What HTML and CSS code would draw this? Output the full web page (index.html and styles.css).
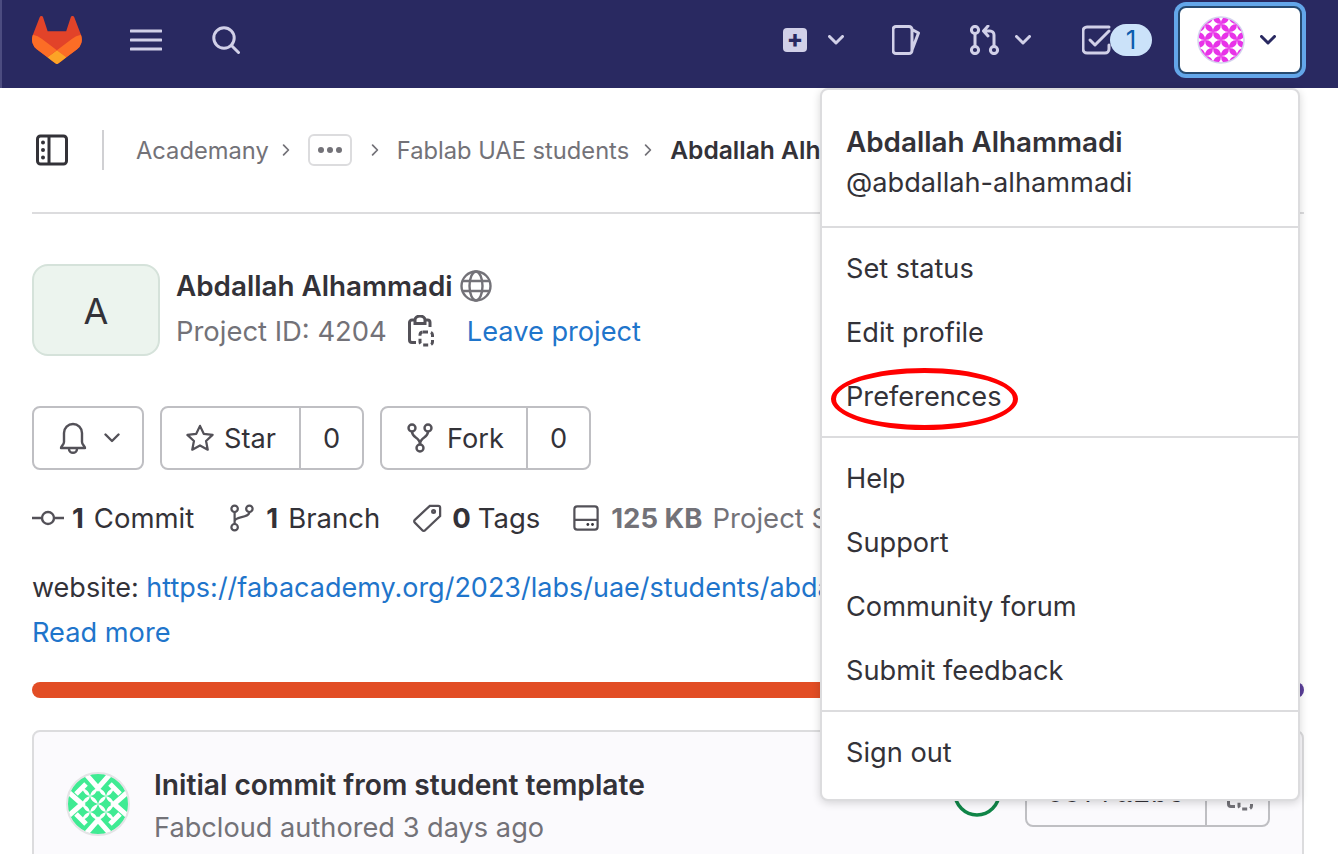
FILE: index.html
```html
<!DOCTYPE html>
<html lang="en">
<head>
<meta charset="utf-8">
<title>Abdallah Alhammadi</title>
<link rel="stylesheet" href="styles.css">
</head>
<body>
<div class="page">
  <header class="topbar">
    <div class="topbar-left">
      <svg class="logo" viewBox="0 0 25 24"><path fill="#E24329" d="m24.507 9.5-.034-.09L21.082.562a.896.896 0 0 0-1.694.091l-2.29 7.01H7.825L5.535.653a.898.898 0 0 0-1.694-.09L.451 9.411.416 9.5a6.297 6.297 0 0 0 2.09 7.278l.012.01.03.022 5.16 3.867 2.56 1.935 1.554 1.176a1.051 1.051 0 0 0 1.268 0l1.555-1.176 2.56-1.935 5.197-3.89.014-.01A6.297 6.297 0 0 0 24.507 9.5Z"/><path fill="#FC6D26" d="m24.507 9.5-.034-.09a11.44 11.44 0 0 0-4.56 2.051l-7.447 5.632 4.742 3.584 5.197-3.89.014-.01A6.297 6.297 0 0 0 24.507 9.5Z"/><path fill="#FCA326" d="m7.707 20.677 2.56 1.935 1.555 1.176a1.051 1.051 0 0 0 1.268 0l1.555-1.176 2.56-1.935-4.743-3.584-4.755 3.584Z"/><path fill="#FC6D26" d="M5.01 11.461a11.43 11.43 0 0 0-4.56-2.05L.416 9.5a6.297 6.297 0 0 0 2.09 7.278l.012.01.03.022 5.16 3.867 4.745-3.584-7.444-5.632Z"/></svg>
      <svg class="ic-bar" viewBox="0 0 32 22"><path d="M1 2h30M1 11h30M1 20h30"/></svg>
      <svg class="ic-bar ic-search" viewBox="0 0 28 28"><circle cx="12" cy="12" r="10.2"/><path d="M19.5 19.5l7 7"/></svg>
    </div>
    <div class="topbar-right">
      <span class="tb-plus">+</span>
      <svg class="ic-bar chev" viewBox="0 0 16 10"><path d="M1.5 1.5L8 8l6.5-6.5"/></svg>
      <svg class="ic-bar ic-issue" viewBox="0 0 28 30"><path d="M4 1.5h13a3 3 0 0 1 3 3v21a3 3 0 0 1-3 3H4a3 3 0 0 1-3-3v-21a3 3 0 0 1 3-3zM20 4.5l6.5 3.5-6.5 17"/></svg>
      <svg class="ic-bar ic-mr" viewBox="0 0 30 30"><circle cx="5" cy="5" r="3.6"/><circle cx="5" cy="25" r="3.6"/><circle cx="24" cy="25" r="3.6"/><path d="M5 9v12M24 21V10a4 4 0 0 0-4-4h-5M18 1l-4.5 5 4.5 5"/></svg>
      <svg class="ic-bar chev chev-mr" viewBox="0 0 16 10"><path d="M1.5 1.5L8 8l6.5-6.5"/></svg>
      <div class="todo">
        <svg class="ic-bar ic-todo" viewBox="0 0 30 30"><path d="M27 20v4a4 4 0 0 1-4 4H5a4 4 0 0 1-4-4V6a4 4 0 0 1 4-4h22"/><path d="M8 15l5 5L27 6"/></svg>
        <span class="badge">1</span>
      </div>
      <button class="userbtn">
        <svg class="avatar-s" viewBox="0 0 48 48">
          <defs><pattern id="mag" x="0" y="0" width="16" height="16" patternUnits="userSpaceOnUse"><rect width="16" height="16" fill="#fff"/><path fill="#e833e8" d="M0 0Q8 0 8 8 0 8 0 0zM16 0Q8 0 8 8 16 8 16 0zM0 16Q8 16 8 8 0 8 0 16zM16 16Q8 16 8 8 16 8 16 16z"/></pattern></defs>
          <circle cx="24" cy="24" r="23" fill="url(#mag)" stroke="#d5d3ee" stroke-width="1.5"/>
        </svg>
        <svg class="chev-dark" viewBox="0 0 16 10"><path d="M1.5 1.5L8 8l6.5-6.5"/></svg>
      </button>
    </div>
  </header>

  <main class="content">
    <nav class="crumbs">
      <svg class="ic-side" viewBox="0 0 32 32"><rect x="1.5" y="2" width="29" height="28" rx="3"/><path d="M13 2v28"/><circle class="dot" cx="7" cy="8.500" r="2"/><circle class="dot" cx="7" cy="16" r="2"/><circle class="dot" cx="7" cy="23.500" r="2"/></svg>
      <span class="crumb-div"></span>
      <span class="crumb">Academany</span>
      <svg class="crumb-chev chev-first" viewBox="0 0 10 16"><path d="M2 2l6 6-6 6"/></svg>
      <span class="more"><i></i><i></i><i></i></span>
      <svg class="crumb-chev chev-second" viewBox="0 0 10 16"><path d="M2 2l6 6-6 6"/></svg>
      <span class="crumb">Fablab UAE students</span>
      <svg class="crumb-chev" viewBox="0 0 10 16"><path d="M2 2l6 6-6 6"/></svg>
      <span class="crumb crumb-cur">Abdallah Alhammadi</span>
    </nav>

    <section class="project">
      <div class="letter">A</div>
      <div class="project-info">
        <div class="project-name"><b>Abdallah Alhammadi</b>
          <svg class="ic-globe" viewBox="0 0 32 32"><circle cx="16" cy="16" r="14.500"/><ellipse cx="16" cy="16" rx="6.500" ry="14.500"/><path d="M2.500 11h27M2.500 21h27"/></svg>
        </div>
        <div class="project-id"><span class="id-text">Project ID: 4204</span>
          <svg class="ic-clip" viewBox="0 0 26 32"><path d="M7 5H4a2.500 2.500 0 0 0-2.500 2.500V25a2.500 2.500 0 0 0 2.500 2.500h4M17 5h2.500A2.500 2.500 0 0 1 22 7.500V12M7 8.500V5a5 4 0 0 1 10 0v3.500z"/><rect class="dash" x="12" y="17" width="12.500" height="13" rx="3"/></svg>
          <a class="link leave">Leave project</a>
        </div>
      </div>
    </section>

    <div class="actions">
      <div class="btn bell">
        <svg class="ic-btn ic-bell" viewBox="0 0 28 32"><path d="M14 2a9 9 0 0 0-9 9v9c0 3-3 4-3 6h24c0-2-3-3-3-6v-9a9 9 0 0 0-9-9zM10 27c0 5 8 5 8 0"/></svg>
        <svg class="ic-chev-g" viewBox="0 0 16 10"><path d="M1.500 1.500L8 8l6.500-6.500"/></svg>
      </div>
      <div class="btn split star">
        <span class="btn-l"><svg class="ic-btn" viewBox="0 0 30 30"><path d="M15 2l4 8.500 9.500 1.200-7 6.500 1.800 9.300L15 23l-8.300 4.500 1.800-9.300-7-6.500L11 10.500z"/></svg>Star</span>
        <span class="btn-r">0</span>
      </div>
      <div class="btn split fork">
        <span class="btn-l"><svg class="ic-btn ic-fork" viewBox="0 0 26 30"><circle cx="5" cy="5" r="3.500"/><circle cx="21" cy="5" r="3.500"/><circle cx="13" cy="25" r="3.500"/><path d="M5 8.500c0 7 8 5 8 13M21 8.500c0 7-8 5-8 13"/></svg>Fork</span>
        <span class="btn-r">0</span>
      </div>
    </div>

    <div class="stats">
      <span class="stat st-commit"><svg class="ic-commit" viewBox="0 0 32 16"><circle cx="16" cy="8" r="6"/><path d="M0 8h10M22 8h10"/></svg><b>1</b> Commit</span>
      <span class="stat st-branch"><svg class="ic-branch" viewBox="0 0 26 30"><circle cx="5" cy="5" r="3.500"/><circle cx="21" cy="5" r="3.500"/><circle cx="5" cy="25" r="3.500"/><path d="M5 8.500v13M21 8.500c0 7-16 4-16 10"/></svg><b>1</b> Branch</span>
      <span class="stat st-tag"><svg class="ic-tag" viewBox="0 0 32 32"><path d="M19 3h9a2 2 0 0 1 2 2v9L14 29a2 2 0 0 1-3 0l-8-8a2 2 0 0 1 0-3z"/><circle cx="23" cy="9" r="1.500"/></svg><b>0</b> Tags</span>
      <span class="stat st-size"><svg class="ic-disk" viewBox="0 0 28 28"><rect x="1.500" y="1.500" width="25" height="25" rx="3"/><path d="M1.500 16h25"/><circle class="dot" cx="16" cy="21" r="1.500"/><circle class="dot" cx="21" cy="21" r="1.500"/></svg><b class="muted">125 KB</b> <span class="muted">Project Storage</span></span>
    </div>

    <p class="desc">website: <a class="link">https://fabacademy.org/2023/labs/uae/students/abdallah-alhammadi/</a></p>
    <a class="link readmore">Read more</a>

    <div class="langbar"><span class="lang-main"></span><span class="lang-end"></span></div>

    <section class="commit">
      <svg class="avatar-c" viewBox="0 0 64 64">
        <defs>
          <pattern id="grn" x="16" y="16" width="16" height="16" patternUnits="userSpaceOnUse"><rect width="16" height="16" fill="#3feb93"/><path fill="#fff" d="M0 0Q7 2 8 8 2 7 0 0zM16 0Q9 2 8 8 14 7 16 0zM0 16Q7 14 8 8 2 9 0 16zM16 16Q9 14 8 8 14 9 16 16z"/></pattern>
          <clipPath id="grn-clip"><circle cx="32" cy="32" r="30.500"/></clipPath>
        </defs>
        <g clip-path="url(#grn-clip)">
          <rect width="64" height="64" fill="#3feb93"/>
          <rect x="16" y="16" width="32" height="32" fill="url(#grn)"/>
          <path class="grn-x" d="M18 0L32 16 46 0M18 64L32 48 46 64M0 18L16 32 0 46M64 18L48 32 64 46M20 12L10 22M44 12L54 22M20 52L10 42M44 52L54 42"/>
        </g>
        <circle cx="32" cy="32" r="31" stroke="#e4e4e6" stroke-width="2"/>
      </svg>
      <div class="commit-text">
        <div class="commit-title">Initial commit from student template</div>
        <div class="commit-meta">Fabcloud authored 3 days ago</div>
      </div>
      <div class="commit-right">
        <svg class="ic-status" viewBox="0 0 48 48"><circle cx="24" cy="24" r="22"/></svg>
        <div class="sha"><span class="sha-l">657fa1bc</span><span class="sha-r"><svg class="ic-clip ic-clip-sha" viewBox="0 0 26 32"><path d="M7 5H4a2.500 2.500 0 0 0-2.500 2.500V25a2.500 2.500 0 0 0 2.500 2.500h4M17 5h2.500A2.500 2.500 0 0 1 22 7.500V12M7 8.500V5a5 4 0 0 1 10 0v3.500z"/><rect class="dash" x="12" y="17" width="12.500" height="13" rx="3"/></svg></span></div>
      </div>
    </section>
  </main>

  <div class="menu">
    <div class="menu-sec menu-user">
      <div class="menu-name">Abdallah Alhammadi</div>
      <div class="menu-handle">@abdallah-alhammadi</div>
    </div>
    <div class="menu-sec">
      <div class="menu-item">Set status</div>
      <div class="menu-item">Edit profile</div>
      <div class="menu-item">Preferences</div>
    </div>
    <div class="menu-sec">
      <div class="menu-item">Help</div>
      <div class="menu-item">Support</div>
      <div class="menu-item">Community forum</div>
      <div class="menu-item">Submit feedback</div>
    </div>
    <div class="menu-sec">
      <div class="menu-item">Sign out</div>
    </div>
  </div>
  <div class="annot"></div>
</div>
</body>
</html>
```
FILE: styles.css
```css
* { box-sizing: border-box; }
html, body { margin: 0; padding: 0; background: #fff; }
body { font-family: Inter, "Noto Sans", "Liberation Sans", sans-serif; font-size: 27.2px; color: #333238; }
svg { display: block; flex: none; fill: none; }
.page { position: relative; width: 1344px; height: 854px; overflow: hidden; }

.topbar { width: 1338px; height: 88px; padding-bottom: 8px; background: #292961; border-left: 2px solid #4c4c80; display: flex; justify-content: space-between; align-items: center; }
.topbar-left { display: flex; align-items: center; padding-left: 30px; }
.logo { width: 50px; height: 48px; }
.ic-bar { stroke: #d1d0e8; stroke-width: 3; stroke-linecap: round; stroke-linejoin: round; width: 32px; height: 22px; margin-left: 48px; }
.ic-search { width: 28px; height: 28px; margin-left: 50px; }
.topbar-right { display: flex; align-items: center; padding-right: 36px; }
.tb-plus { width: 24px; height: 24px; border-radius: 4px; background: #d1d0e8; color: #292961; font-size: 24px; font-weight: 800; line-height: 22px; text-align: center; }
.chev { width: 16px; height: 10px; margin-left: 21px; }
.ic-issue { width: 28px; height: 30px; margin-left: 48px; }
.ic-mr { width: 30px; height: 30px; margin-left: 50px; }
.chev-mr { margin-left: 15px; }
.todo { display: flex; align-items: center; margin-left: 51px; }
.ic-todo { width: 30px; height: 30px; margin-left: 0; }
.badge { width: 42px; height: 32px; border-radius: 16px; background: #cbe2f9; color: #0b5cad; font-size: 26px; line-height: 32px; text-align: center; margin-left: -2px; }
.userbtn { width: 124px; height: 68px; margin-left: 26px; padding: 0 0 0 17px; background: #fff; border: 2px solid #264a70; border-radius: 8px; box-shadow: 0 0 0 4px #63a6e9; display: flex; align-items: center; }
.avatar-s { width: 48px; height: 48px; }
.chev-dark { width: 16px; height: 10px; margin-left: 15px; stroke: #292961; stroke-width: 3; stroke-linecap: round; stroke-linejoin: round; }

.content { padding: 0 34px 0 32px; width: 1338px; }
.crumbs { height: 126px; border-bottom: 2px solid #dcdcde; display: flex; align-items: center; color: #737278; padding-left: 4px; white-space: nowrap; overflow: hidden; font-size: 23.7px; }
.ic-side { width: 32px; height: 32px; stroke: #333238; stroke-width: 3; }
.dot { fill: #333238; stroke: none; }
.crumb-div { width: 2px; height: 40px; background: #d0d0d3; margin: 0 32px 0 34px; }
.crumb-chev { width: 8px; height: 14px; stroke: #737278; stroke-width: 2.200; margin: 0 18px 0 15px; stroke-linecap: round; stroke-linejoin: round; }
.chev-first { margin-left: 13px; }
.chev-second { margin-left: 19px; }
.crumb-cur { color: #333238; font-weight: 600; font-size: 24.6px; }
.more { width: 44px; height: 32px; border: 2px solid #dcdcde; border-radius: 6px; display: flex; align-items: center; justify-content: center; gap: 3px; }
.more i { width: 6px; height: 6px; border-radius: 50%; background: #737278; }

.project { display: flex; margin-top: 50px; }
.letter { width: 128px; height: 92px; background: #ecf4ee; border: 2px solid #d5e2da; border-radius: 16px; display: flex; align-items: center; justify-content: center; font-size: 36px; padding-top: 2px; }
.project-info { margin-left: 16px; }
.project-name { display: flex; align-items: center; gap: 7px; height: 40px; margin-top: 2px; }
.project-name b { font-weight: 600; font-size: 27.8px; }
.ic-globe { width: 32px; height: 32px; stroke: #737278; stroke-width: 2.400; }
.project-id { display: flex; align-items: center; height: 40px; margin-top: 5px; color: #737278; }
.id-text { font-size: 27.4px; }
.ic-clip { width: 26px; height: 32px; stroke: #535158; stroke-width: 3; margin-left: 21px; margin-right: 33px; }
.dash { stroke-dasharray: 5 3; }
.ic-clip-sha { margin: 0 0 0 4px; stroke: #737278; }
.link { color: #1f75cb; }

.actions { display: flex; gap: 16px; margin-top: 50px; }
.btn { height: 64px; border: 2px solid #bfbfc3; border-radius: 8px; display: flex; align-items: center; }
.bell { width: 112px; padding-left: 25px; }
.ic-btn { stroke: #535158; stroke-width: 2.400; stroke-linejoin: round; width: 28px; height: 28px; }
.ic-bell { width: 28px; height: 32px; }
.ic-fork { width: 26px; height: 30px; }
.ic-chev-g { width: 16px; height: 10px; stroke: #535158; stroke-width: 2.400; margin-left: 17px; stroke-linecap: round; stroke-linejoin: round; }
.split { padding: 0; }
.btn-l { display: flex; align-items: center; gap: 10px; height: 100%; border-right: 2px solid #bfbfc3; }
.star .btn-l { width: 139px; padding-left: 24px; }
.star .btn-r { width: 61px; }
.fork .btn-l { width: 146px; padding-left: 25px; gap: 14px; }
.fork .btn-r { width: 61px; }
.btn-r { text-align: center; }

.stats { display: flex; align-items: center; margin-top: 28px; height: 40px; white-space: nowrap; font-size: 27.5px; }
.stat { display: flex; align-items: center; gap: 7px; }
.stat b { font-weight: 700; margin-right: 3px; }
.ic-commit { width: 32px; height: 16px; stroke: #535158; stroke-width: 2.400; margin-right: 1px; }
.ic-branch { width: 24px; height: 30px; stroke: #535158; stroke-width: 2.400; margin-right: 5px; }
.ic-tag { width: 30px; height: 30px; stroke: #535158; stroke-width: 2.400; margin-right: 3px; }
.ic-disk { width: 26px; height: 26px; stroke: #535158; stroke-width: 2.400; margin-right: 5px; }
.st-branch { margin-left: 36px; }
.st-tag { margin-left: 32px; }
.st-tag b { margin-right: 0; }
.st-size { margin-left: 33px; }
.muted { color: #737278; }

.desc { margin: 30px 0 0; height: 40px; line-height: 40px; white-space: nowrap; overflow: hidden; font-size: 27px; }
.readmore { display: block; margin-top: 5px; height: 40px; line-height: 40px; }

.langbar { display: flex; height: 16px; margin-top: 29px; border-radius: 8px; overflow: hidden; }
.lang-main { flex: 1; background: #e24d25; }
.lang-end { width: 20px; background: #5b3f99; }

.commit { display: flex; align-items: flex-start; height: 160px; margin-top: 32px; padding: 40px 32px 0 32px; background: #fbfafd; border: 2px solid #dcdcde; border-radius: 8px; }
.avatar-c { width: 64px; height: 64px; }
.grn-x { stroke: #fff; stroke-width: 5; }
.commit-text { margin-left: 24px; margin-top: -7px; }
.commit-title { font-weight: 600; height: 40px; line-height: 40px; font-size: 28.2px; }
.commit-meta { color: #737278; height: 40px; line-height: 40px; margin-top: 3px; }
.commit-right { margin-left: auto; display: flex; align-items: flex-start; margin-top: -9px; }
.ic-status { width: 48px; height: 48px; stroke: #108548; stroke-width: 3.500; margin-top: 6px; margin-right: 24px; }
.sha { display: flex; width: 245px; height: 64px; border: 2px solid #bfbfc3; border-radius: 8px; }
.sha-l { width: 180px; text-align: center; font-family: "Liberation Mono", monospace; letter-spacing: 1px; line-height: 60px; border-right: 2px solid #bfbfc3; }
.sha-r { flex: 1; display: flex; align-items: center; justify-content: center; }

.menu { position: absolute; left: 820px; top: 88px; width: 480px; height: 713px; background: #fff; border: 2px solid #dcdcde; border-radius: 8px; box-shadow: 0 2px 8px rgba(0,0,0,.16); }
.menu-sec { padding: 9px 0 7px; border-top: 2px solid #dcdcde; }
.menu-sec:first-child { border-top: 0; }
.menu-user { padding: 32px 24px 23px; height: 136px; line-height: 40px; }
.menu-name { font-weight: 600; font-size: 27.8px; height: 41px; }
.menu-handle { color: #333238; }
.menu-item { height: 64px; padding: 0 24px; line-height: 64px; }

.annot { position: absolute; left: 831px; top: 368px; width: 187px; height: 62px; border: 5px solid #f00; border-radius: 50%; }
```
